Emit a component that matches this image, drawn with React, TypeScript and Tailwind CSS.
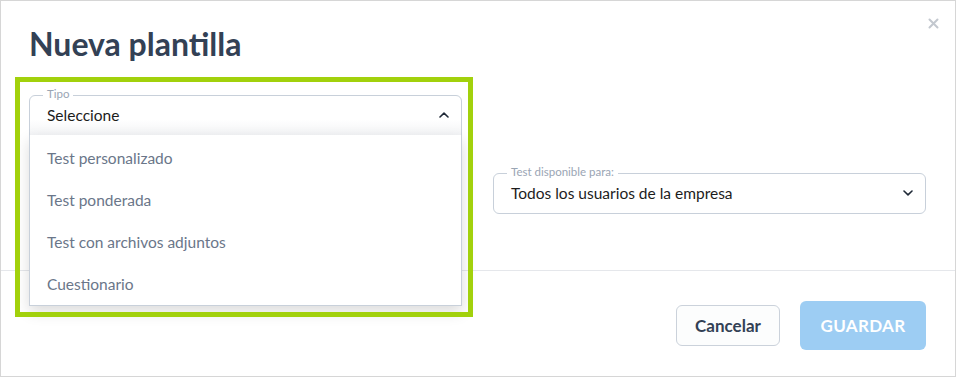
import React from "react";

const ChevronUp = () => (
  <svg width="10" height="6" viewBox="0 0 10 6" fill="none">
    <path d="M1 5L5 1.2L9 5" stroke="#1f2937" strokeWidth="1.6" strokeLinecap="round" strokeLinejoin="round" />
  </svg>
);

const ChevronDown = () => (
  <svg width="10" height="6" viewBox="0 0 10 6" fill="none">
    <path d="M1 1L5 4.8L9 1" stroke="#1f2937" strokeWidth="1.6" strokeLinecap="round" strokeLinejoin="round" />
  </svg>
);

export default function App() {
  const items = ["Test personalizado", "Test ponderada", "Test con archivos adjuntos", "Cuestionario"];
  return (
    <div
      className="relative w-[956px] h-[377px] bg-white border border-[#d6d6d6] flex flex-col overflow-hidden"
      style={{ fontFamily: "Lato, 'Liberation Sans', sans-serif" }}
    >
      {/* close */}
      <button className="absolute right-[16px] top-[16px] w-[12px] h-[12px] flex items-center justify-center">
        <svg width="11" height="11" viewBox="0 0 11 11" fill="none">
          <path d="M1.5 1.5L9.5 9.5M9.5 1.5L1.5 9.5" stroke="#c3c8cf" strokeWidth="2" strokeLinecap="round" />
        </svg>
      </button>

      <div className="pl-[28px] pt-[23px]">
        <h1 className="text-[32px] leading-[40px] font-bold text-[#334155]">Nueva plantilla</h1>
      </div>

      <div className="mt-[31px] pl-[28px] grid grid-cols-[433px_433px] gap-x-[31px] gap-y-[37px] pb-[56px]">
        {/* Tipo */}
        <div className="relative h-[41px] rounded-t-[6px] border border-[#c8d0da] bg-gradient-to-b from-white from-60% to-[#f3f4f6] flex items-center justify-between pl-[17px] pr-[12px] pb-[2px]">
          <span className="absolute left-[13px] -top-[9px] px-1 bg-white text-[11.5px] leading-[14px] text-[#9aa5b4]">Tipo</span>
          <span className="text-[15.5px] leading-[20px] text-[#1c1c1c]">Seleccione</span>
          <ChevronUp />
          <div className="absolute left-[-1px] right-[-1px] top-full bg-white border-x border-b border-[#c8d0da] pt-[2px] z-10 shadow-[0_6px_14px_rgba(0,0,0,0.14)]">
            {items.map((t) => (
              <div key={t} className="h-[42px] flex items-center pl-[17px] text-[15.5px] leading-[20px] text-[#6a7689]">
                {t}
              </div>
            ))}
          </div>
        </div>
        <div />
        <div />
        {/* Disponible */}
        <div className="relative h-[41px] rounded-[6px] border border-[#c8d0da] flex items-center justify-between pl-[17px] pr-[12px] pb-[2px]">
          <span className="absolute left-[13px] -top-[9px] px-1 bg-white text-[11.5px] leading-[14px] text-[#9aa5b4]">Test disponible para:</span>
          <span className="text-[15.5px] leading-[20px] text-[#1c1c1c]">Todos los usuarios de la empresa</span>
          <ChevronDown />
        </div>
      </div>

      <div className="border-t border-[#e5e7eb] h-[105px] flex items-center justify-end gap-[20px] pr-[29px] pt-[5px]">
        <button className="w-[104px] h-[41px] rounded-[6px] border border-[#cbd2db] bg-[#fcfdfd] text-[17px] font-bold text-[#334155]">
          Cancelar
        </button>
        <button className="w-[126px] h-[49px] rounded-[6px] bg-[#9dcdf3] text-[17px] font-bold text-white tracking-[0.3px]">
          GUARDAR
        </button>
      </div>

      {/* highlight */}
      <div className="absolute left-[14px] top-[76px] w-[458px] h-[240px] border-[5px] border-[#a2d10c] z-20 pointer-events-none" />
    </div>
  );
}
